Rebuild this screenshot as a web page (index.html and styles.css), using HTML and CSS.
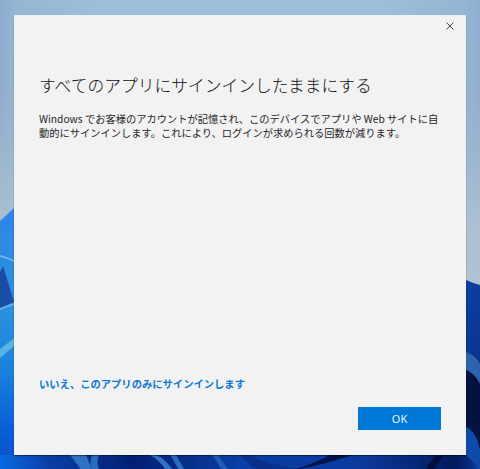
FILE: index.html
```html
<!DOCTYPE html>
<html lang="ja">
<head>
  <meta charset="UTF-8">
  <meta name="viewport" content="width=device-width, initial-scale=1.0">
  <title>すべてのアプリにサインインしたままにする</title>
  <link rel="stylesheet" href="styles.css">
</head>
<body>
  <!-- desktop wallpaper -->
  <svg class="wallpaper" viewBox="0 0 480 469" preserveAspectRatio="none" aria-hidden="true">
    <defs>
      <linearGradient id="sky" x1="0" y1="0" x2="0" y2="1">
        <stop offset="0" stop-color="#9cbfd9"/>
        <stop offset="0.5" stop-color="#a3bdd2"/>
        <stop offset="1" stop-color="#b2c3d0"/>
      </linearGradient>
      <linearGradient id="skyEdges" x1="0" y1="0" x2="1" y2="0">
        <stop offset="0" stop-color="#7f9fc4" stop-opacity="0.55"/>
        <stop offset="0.04" stop-color="#7f9fc4" stop-opacity="0.25"/>
        <stop offset="0.2" stop-color="#7f9fc4" stop-opacity="0"/>
        <stop offset="0.8" stop-color="#7f9fc4" stop-opacity="0"/>
        <stop offset="0.97" stop-color="#7f9fc4" stop-opacity="0.3"/>
        <stop offset="1" stop-color="#7f9fc4" stop-opacity="0.5"/>
      </linearGradient>
      <linearGradient id="edgeFade" x1="0" y1="0" x2="0" y2="1">
        <stop offset="0" stop-color="#fff"/>
        <stop offset="0.4" stop-color="#fff"/>
        <stop offset="1" stop-color="#000"/>
      </linearGradient>
      <mask id="edgeMask">
        <rect width="480" height="220" fill="url(#edgeFade)"/>
      </mask>
      <linearGradient id="leftBloom" x1="0" y1="0" x2="0" y2="1">
        <stop offset="0" stop-color="#2f86e6"/>
        <stop offset="0.4" stop-color="#2c8fe0"/>
        <stop offset="0.62" stop-color="#1a82dc"/>
        <stop offset="0.85" stop-color="#0a5ed6"/>
        <stop offset="1" stop-color="#0650c4"/>
      </linearGradient>
      <linearGradient id="bottomBloom" x1="0" y1="0" x2="1" y2="0">
        <stop offset="0" stop-color="#0a6ae0"/>
        <stop offset="0.1" stop-color="#0a3fa8"/>
        <stop offset="0.28" stop-color="#021f72"/>
        <stop offset="0.5" stop-color="#0a3fa6"/>
        <stop offset="0.75" stop-color="#0a3a9e"/>
        <stop offset="0.95" stop-color="#021a5c"/>
        <stop offset="1" stop-color="#0a3a9a"/>
      </linearGradient>
      <linearGradient id="rightBloom" x1="0" y1="0" x2="0" y2="1">
        <stop offset="0" stop-color="#0c3ea0"/>
        <stop offset="1" stop-color="#052a80"/>
      </linearGradient>
    </defs>
    <rect width="480" height="300" fill="url(#sky)"/>
    <rect width="480" height="220" fill="url(#skyEdges)" mask="url(#edgeMask)"/>

    <!-- left edge -->
    <path d="M0 221 L14 208 V469 H0Z" fill="url(#leftBloom)"/>
    <path d="M0 255 C5 256 10 258 14 260 V262 C10 260 5 258 0 257Z" fill="#6fb4ea"/>
    <path d="M3 266 L14 302 L0 308 V272Z" fill="#1a4ea4"/>
    <path d="M0 308 L14 303 V305 L0 310Z" fill="#5fb2e6"/>
    <path d="M0 349 L14 338 V346 L0 358Z" fill="#58b4e2"/>

    <!-- right edge -->
    <path d="M466 280 C471 282 476 284 480 285 V469 H466Z" fill="url(#rightBloom)"/>
    <path d="M466 352 C472 354 477 358 480 364 V384 H466Z" fill="#2f62ac"/>
    <path d="M466 370 C472 372 477 378 480 384 V469 H466Z" fill="#04123f"/>
    <path d="M466 427 C473 430 478 438 480 450 V469 H466Z" fill="#0e4aa8"/>

    <!-- bottom edge -->
    <path d="M0 455 H480 V469 H0Z" fill="url(#bottomBloom)"/>
    <path d="M70 455 C74 460 78 465 80 469 H92 C90 464 88 460 86 455Z" fill="#2f72c4"/>
    <path d="M92 455 C90 460 90 465 92 469 H99 C97 464 97 460 99 455Z" fill="#2a6cc0"/>
    <path d="M150 455 C157 459 162 464 165 469 H172 C168 463 163 458 156 455Z" fill="#2f72c4"/>
    <path d="M170 455 C174 460 176 465 178 469 H184 C181 463 178 459 176 455Z" fill="#2a6cc0"/>
    <path d="M212 455 C216 460 219 465 221 469 H228 C224 463 220 458 218 455Z" fill="#1f5cb4"/>
    <path d="M240 455 C246 461 250 465 256 469 H300 C280 466 262 462 250 455Z" fill="#0a2f88"/>
    <path d="M300 455 H352 C335 461 315 466 300 469 H296 C312 464 322 459 330 455Z" fill="#02124a"/>
    <path d="M436 455 C432 460 428 465 426 469 H434 C438 464 440 460 444 455Z" fill="#020f3a"/>
    <path d="M466 455 C472 460 476 465 478 469 H480 V455Z" fill="#0e4aa8"/>
  </svg>

  <div class="dialog">
    <div class="title-bar">
      <svg class="close-icon" viewBox="0 0 8 8" aria-label="閉じる">
        <path d="M0.5 0.5 L7.5 7.5 M7.5 0.5 L0.5 7.5"/>
      </svg>
    </div>
    <div class="content">
      <h1>すべてのアプリにサインインしたままにする</h1>
      <p class="description">Windows でお客様のアカウントが記憶され、このデバイスでアプリや Web サイトに自<br>動的にサインインします。これにより、ログインが求められる回数が減ります。</p>
      <a class="skip-link" href="#">いいえ、このアプリのみにサインインします</a>
    </div>
    <div class="actions">
      <button class="ok-btn">OK</button>
    </div>
  </div>
</body>
</html>
```
FILE: styles.css
```css
html, body {
  height: 100%;
}
body {
  margin: 0;
  padding: 15px 14px 14px;
  box-sizing: border-box;
  overflow: hidden;
  font-family: "Noto Sans CJK JP", "Noto Sans", sans-serif;
  color: #1f1f1f;
}
.wallpaper {
  position: absolute;
  top: 0;
  left: 0;
  width: 480px;
  height: 469px;
  z-index: -1;
}
.dialog {
  display: flex;
  flex-direction: column;
  height: 440px;
  background: #f2f2f2;
  box-shadow: 0 1px 1px rgba(0, 0, 0, 0.45);
}
.title-bar {
  display: flex;
  justify-content: flex-end;
  height: 24px;
  padding: 7px 12px 0 0;
  box-sizing: border-box;
}
.close-icon {
  width: 8px;
  height: 8px;
}
.close-icon path {
  stroke: #333;
  stroke-width: 0.9;
  fill: none;
}
.content {
  flex: 1;
  display: flex;
  flex-direction: column;
  padding: 0 24px 0 25px;
}
h1 {
  margin: 34px 0 0;
  font-size: 16.75px;
  line-height: 24px;
  font-weight: 300;
  color: #0c0c0c;
}
.description {
  margin: 15px 0 0;
  font-size: 10.25px;
  line-height: 14px;
  white-space: nowrap;
  color: #262626;
}
.skip-link {
  margin-top: auto;
  margin-bottom: 16px;
  font-size: 10.3px;
  line-height: 14px;
  font-weight: 700;
  color: #0b78d7;
  text-decoration: none;
}
.actions {
  display: flex;
  justify-content: flex-end;
  padding: 0 25px 25px;
}
.ok-btn {
  width: 83px;
  height: 23px;
  padding: 0;
  border: none;
  background: #0078d7;
  color: #e8f2fb;
  font-family: "Noto Sans", sans-serif;
  font-size: 11px;
}
```
